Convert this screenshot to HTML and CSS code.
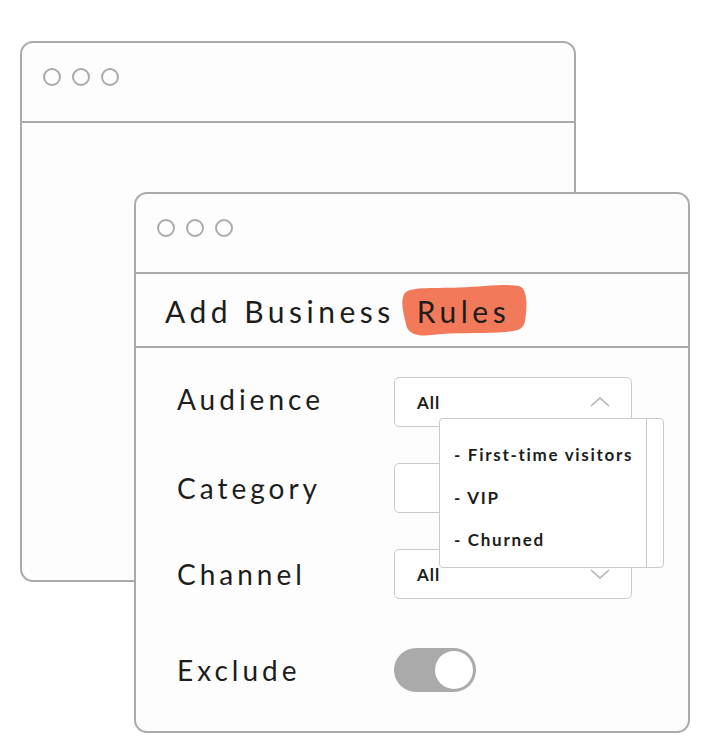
FILE: index.html
```html
<!DOCTYPE html>
<html>
<head>
  <title>Add Business Rules</title>
  <link rel="stylesheet" href="styles.css">
</head>
<body>

  <div class="desk">
    <div class="window window-back">
      <div class="window-bar">
        <span class="dot"></span><span class="dot"></span><span class="dot"></span>
      </div>
    </div>

    <div class="window window-front">
      <div class="window-bar">
        <span class="dot"></span><span class="dot"></span><span class="dot"></span>
      </div>

      <h1 class="title">Add Business<span class="mark"><svg class="mark-bg" viewBox="0 0 128 48" preserveAspectRatio="none"><path d="M6 10 C10 3 32 5 60 4 C86 3 110 0 121 3 C128 6 128 20 126 32 C125 42 118 43 100 44 C80 45 55 44 36 46 C18 48 10 45 8 37 C6 28 2 18 6 10 Z"/></svg>Rules</span></h1>

      <div class="rules">
        <div class="rule-row">
          <span class="rule-label">Audience</span>
          <div class="select">
            <span class="select-value">All</span>
            <svg class="chevron" viewBox="0 0 20 10"><path d="M1 9 L10 1 L19 9"/></svg>
            <div class="dropdown">
              <ul class="dropdown-list">
                <li>- First-time visitors</li>
                <li>- VIP</li>
                <li>- Churned</li>
              </ul>
              <div class="dropdown-track"></div>
            </div>
          </div>
        </div>
        <div class="rule-row">
          <span class="rule-label">Category</span>
          <div class="select">
            <span class="select-value"></span>
            <svg class="chevron" viewBox="0 0 20 10"><path d="M1 1 L10 9 L19 1"/></svg>
          </div>
        </div>
        <div class="rule-row">
          <span class="rule-label">Channel</span>
          <div class="select">
            <span class="select-value">All</span>
            <svg class="chevron" viewBox="0 0 20 10"><path d="M1 1 L10 9 L19 1"/></svg>
          </div>
        </div>
        <div class="rule-row rule-row-toggle">
          <span class="rule-label">Exclude</span>
          <div class="toggle"><span class="knob"></span></div>
        </div>
      </div>
    </div>
  </div>

</body>
</html>
```

FILE: styles.css
```css
body {
  margin: 0;
  background: #fff;
  font-family: Lato, "Open Sans", sans-serif;
  color: #1d1d1b;
}
.desk {
  position: relative;
  width: 713px;
  height: 743px;
}
.window {
  position: absolute;
  width: 556px;
  height: 541px;
  box-sizing: border-box;
  border: 2px solid #aaa;
  border-radius: 13px;
  background: #fdfdfd;
}
.window-back {
  left: 20px;
  top: 41px;
}
.window-front {
  left: 134px;
  top: 192px;
}
.window-bar {
  display: flex;
  gap: 11px;
  height: 80px;
  box-sizing: border-box;
  padding: 25px 0 0 21px;
  border-bottom: 2px solid #aaa;
}
.dot {
  width: 18px;
  height: 18px;
  box-sizing: border-box;
  border: 2px solid #aaa;
  border-radius: 50%;
}
.title {
  display: flex;
  align-items: center;
  height: 74px;
  margin: 0;
  padding: 2px 0 0 29px;
  box-sizing: border-box;
  border-bottom: 2px solid #aaa;
  font-size: 30px;
  font-weight: normal;
  letter-spacing: 4.5px;
}
.mark {
  position: relative;
  z-index: 0;
  margin-left: 22px;
}
.mark-bg {
  position: absolute;
  z-index: -1;
  left: -19px;
  top: -10px;
  width: calc(100% + 36px);
  height: calc(100% + 18px);
  fill: #f27a5a;
}
.rules {
  display: flex;
  flex-direction: column;
  gap: 36px;
  padding: 29px 0 0 41px;
}
.rule-row {
  display: grid;
  grid-template-columns: 217px 238px;
  align-items: center;
  height: 50px;
}
.rule-row-toggle {
  margin-top: 10px;
}
.rule-label {
  font-size: 28px;
  letter-spacing: 4px;
}
.rule-row:first-child .rule-label {
  margin-top: -6px;
}
.select {
  position: relative;
  display: flex;
  align-items: center;
  justify-content: space-between;
  height: 50px;
  box-sizing: border-box;
  padding: 0 21px 0 22px;
  border: 1px solid #c9c9c9;
  border-radius: 5px;
  background: #fff;
  font-size: 17px;
  font-weight: bold;
  letter-spacing: 1px;
}
.chevron {
  width: 20px;
  height: 10px;
  fill: none;
  stroke: #b0b0b0;
  stroke-width: 1.5;
}
.dropdown {
  position: absolute;
  z-index: 2;
  left: 44px;
  top: 40px;
  display: flex;
  width: 225px;
  height: 150px;
  box-sizing: border-box;
  border: 1px solid #c9c9c9;
  border-radius: 4px;
  background: #fff;
}
.dropdown-list {
  flex: 1;
  margin: 0;
  padding: 19px 0 0 14px;
  list-style: none;
  letter-spacing: 1.7px;
}
.dropdown-list li {
  height: 42.5px;
  line-height: 34px;
}
.dropdown-track {
  width: 16px;
  border-left: 1px solid #c9c9c9;
}
.toggle {
  display: flex;
  justify-content: flex-end;
  align-items: center;
  width: 82px;
  height: 44px;
  box-sizing: border-box;
  padding-right: 3px;
  border-radius: 22px;
  background: #aaa;
}
.knob {
  width: 38px;
  height: 38px;
  border-radius: 50%;
  background: #fff;
}
```
